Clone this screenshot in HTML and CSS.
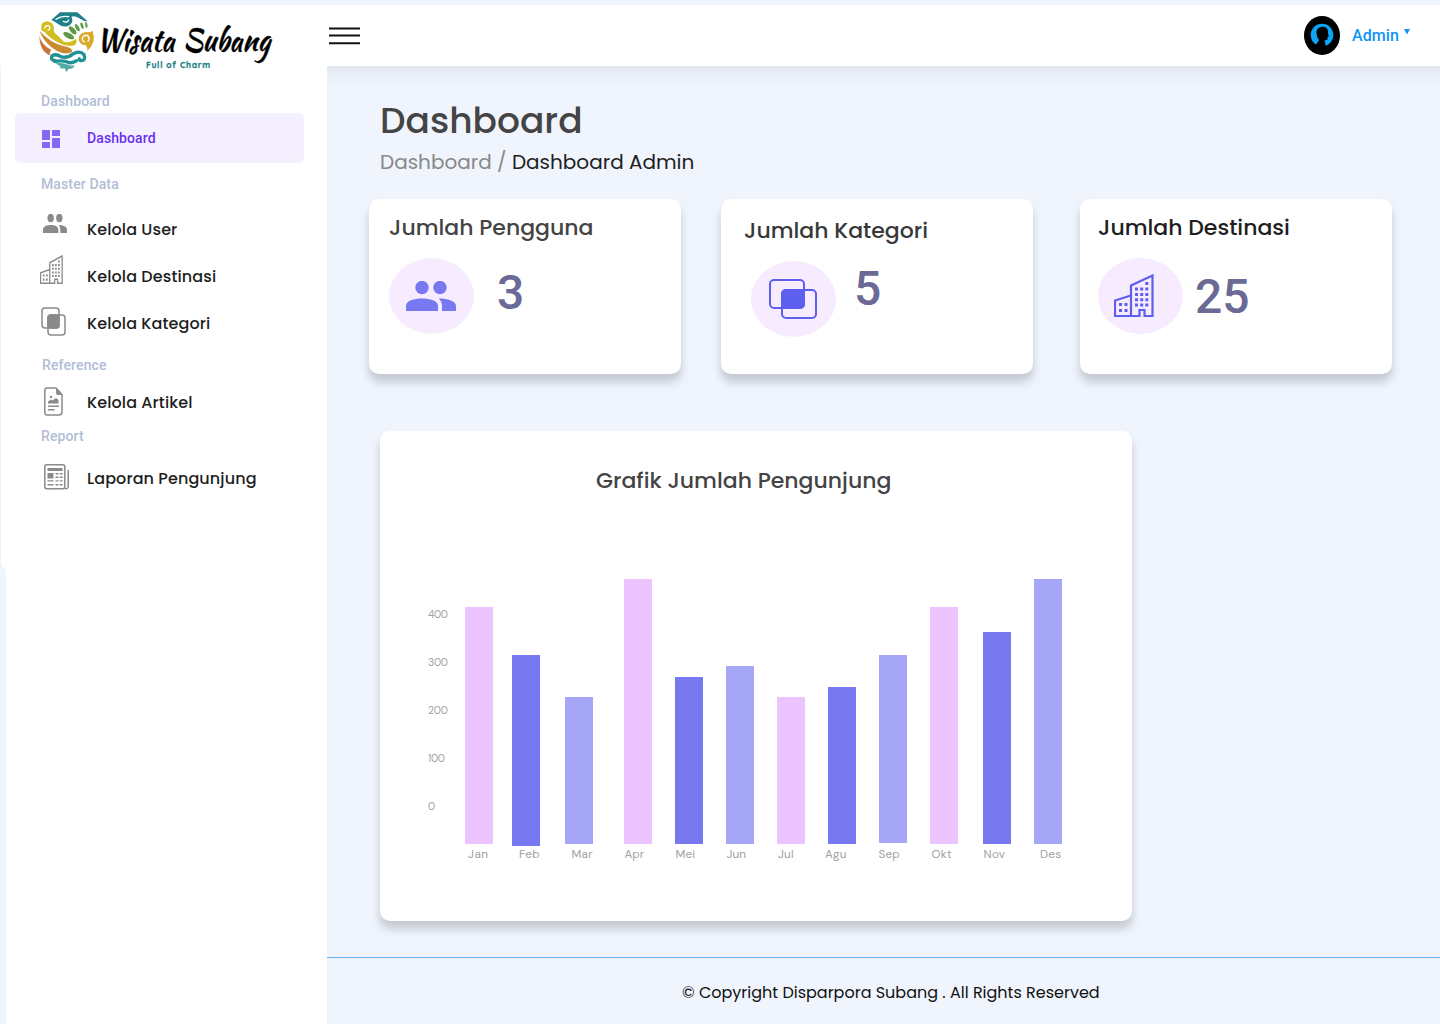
FILE: index.html
```html
<!DOCTYPE html>
<html lang="id">
<head>
<meta charset="utf-8">
<title>Dashboard - Wisata Subang</title>
<link rel="stylesheet" href="styles.css">
</head>
<body>
<svg class="defs" width="0" height="0" aria-hidden="true">
  <symbol id="users" viewBox="0 0 50 30" preserveAspectRatio="none">
    <circle cx="16" cy="6.5" r="6.7"/><circle cx="34" cy="6.5" r="6.7"/>
    <path d="M0 30V25C0 19.500 8 17.500 16 17.500S32 19.500 32 25V30ZM32.500 17.500C42 17.500 50 20 50 25V30H36V25C36 21.500 34.500 19 32.500 17.500Z"/>
  </symbol>
  <symbol id="building" viewBox="0 0 40 43" preserveAspectRatio="none">
    <path fill="none" stroke="currentColor" stroke-width="2.200" d="M1 42V26.500L17 21.500V42ZM17 42V11.500L38.500 1.500V42H30.500V36H25.500V42Z"/>
    <path d="M5 29h3v3h-3zM10.500 29h3v3h-3zM5 35h3v3h-3zM10.500 35h3v3h-3zM31.300 8h3v3h-3zM21 13.500h3v3h-3zM26.200 13.500h3v3h-3zM31.300 13.500h3v3h-3zM21 19h3v3h-3zM26.200 19h3v3h-3zM31.300 19h3v3h-3zM21 24.300h3v3h-3zM26.200 24.300h3v3h-3zM31.300 24.300h3v3h-3zM21 29.500h3v3h-3zM26.200 29.500h3v3h-3zM31.300 29.500h3v3h-3z"/>
  </symbol>
</svg>
<div class="app">
  <aside class="sidebar">
    <div class="logo">
      <svg width="240" height="66" viewBox="0 0 240 66">
        <g transform="translate(-40 -5) scale(.3333)" fill="none" stroke-linecap="round">
          <path fill="#1f7f87" d="M154 60L180 37H232L263 64Q250 64 238 55Q224 46 214 50Q222 64 210 75Q196 84 180 76Q168 66 154 60Z"/>
          <path stroke="#fff" stroke-width="4" d="M168 58Q184 46 206 50M190 64Q202 70 206 60"/>
          <path fill="#d0bd22" d="M124 88Q120 66 142 64Q160 66 162 84Q158 96 170 104Q180 112 190 124Q206 132 228 116Q232 130 224 136Q200 142 176 128Q150 116 134 96Q126 96 124 88Z"/>
          <path stroke="#fff" stroke-width="4" d="M134 84Q138 74 147 78Q154 86 144 90"/>
          <path fill="#c98a30" d="M118 92Q150 128 190 138Q220 142 216 156Q196 166 170 152Q134 132 118 92Z"/>
          <path fill="#c8743b" d="M118 108Q124 134 154 150Q146 158 152 166Q120 158 118 108Z"/>
          <path fill="#dba92c" d="M278 92Q290 128 262 152Q262 142 258 136Q236 134 236 116Q238 98 258 96Q270 98 278 92Z"/>
          <path stroke="#fff" stroke-width="4" d="M254 126Q244 122 248 112Q254 102 264 108Q270 116 264 124"/>
          <path stroke="#1f9294" stroke-width="10" d="M166 182Q150 180 156 168Q168 160 182 170Q204 176 218 162Q240 150 252 164Q258 180 246 182Q238 182 238 176M164 184Q186 180 202 186Q216 192 230 182"/>
          <path fill="#53aaa4" d="M165 190Q185 186 205 194Q218 200 224 194Q222 207 205 207L200 217L194 205Q176 208 182 200Q174 194 165 190Z"/>
          <g fill="#5e9a48"><ellipse cx="206" cy="107" rx="18" ry="8" transform="rotate(28 206 107)"/><ellipse cx="218" cy="91" rx="15" ry="7" transform="rotate(48 218 91)"/><ellipse cx="232" cy="83" rx="12" ry="5" transform="rotate(62 232 83)"/><ellipse cx="246" cy="77" rx="10" ry="4" transform="rotate(72 246 77)"/><ellipse cx="259" cy="75" rx="9" ry="3.500" transform="rotate(80 259 75)"/></g>
        </g>
        <text class="script" x="56.500" y="46" textLength="78" lengthAdjust="spacingAndGlyphs">Wisata</text>
        <text class="script" x="143" y="46" textLength="87" lengthAdjust="spacingAndGlyphs">Subang</text>
        <text class="tag" x="106" y="62.500" textLength="64">Full of Charm</text>
      </svg>
    </div>
    <nav class="menu">
      <h2 class="group g1">Dashboard</h2>
      <a class="item active"><span class="ico"><svg width="18" height="18" fill="#8567f5"><path d="M0 0h8v10H0zM10 0h8v6h-8zM0 12h8v6H0zM10 8h8v10h-8z"/></svg></span><span class="label">Dashboard</span></a>
      <h2 class="group g2">Master Data</h2>
      <a class="item"><span class="ico up"><svg width="24" height="19"><use href="#users"/></svg></span><span class="label">Kelola User</span></a>
      <a class="item"><span class="ico bld"><svg width="23" height="29"><use href="#building"/></svg></span><span class="label">Kelola Destinasi</span></a>
      <a class="item"><span class="ico cat"><svg width="25" height="29" fill="none" stroke="currentColor" stroke-width="1.500"><rect x="1" y="1" width="17" height="20" rx="3"/><rect x="7" y="8" width="17" height="20" rx="3"/><rect x="7" y="8" width="11" height="13" rx="2.500" fill="currentColor"/></svg></span><span class="label">Kelola Kategori</span></a>
      <h2 class="group g3">Reference</h2>
      <a class="item art"><span class="ico"><svg width="22" height="29" viewBox="-2 0 22 29"><path fill="none" stroke="currentColor" stroke-width="1.500" d="M3 1H12L18 7.500V25Q18 28 15 28H3Q.8 28 .8 25V4Q.8 1 3 1Z"/><path d="M12 1V5.500Q12 8 14 8H18ZM4 16.500V14.500L7 12.500L8.500 13.500L12 11L14.500 13V16.500ZM4 18.500h11v1.500H4zM4 22h6.500v1.500H4z"/><circle cx="7" cy="10" r="1.200"/></svg></span><span class="label">Kelola Artikel</span></a>
      <h2 class="group g4">Report</h2>
      <a class="item rep"><span class="ico"><svg width="27" height="26" viewBox="-2 0 27 26"><rect x=".8" y=".8" width="20" height="24" rx="2" fill="none" stroke="currentColor" stroke-width="1.500"/><path fill="none" stroke="currentColor" stroke-width="1.500" d="M21 24.800Q24.300 25 24.200 22V6"/><path d="M3.500 4h15v3h-15zM3.500 9h6v5.500h-6zM11.500 9h3v1.400h-3zM15.700 9h3v1.400h-3zM11.500 12.500h3v1.400h-3zM15.700 12.500h3v1.400h-3zM3.500 16.200h6v1.400h-6zM11.500 16.200h3v1.400h-3zM15.700 16.200h3v1.400h-3zM3.500 20h6v1.400h-6zM11.500 20h3v1.400h-3zM15.700 20h3v1.400h-3z"/></svg></span><span class="label">Laporan Pengunjung</span></a>
    </nav>
  </aside>
  <div class="page">
    <header class="topbar">
      <svg class="burger" width="31" height="18" stroke="#111" stroke-width="2"><path d="M0 1.400h31M0 8.600h31M0 16.300h31"/></svg>
      <div class="account">
        <svg width="36" height="39" viewBox="0 0 36 39"><ellipse cx="18" cy="19.500" rx="18" ry="19.500"/><circle cx="18" cy="19" r="11.300" fill="#0aa5f5"/><path d="M12.500 17Q12 12 17 11Q23 10 24 15V18L25 20L23.500 21V23.500L20.500 24.500L22 31L24 34Q17 34 10 30Q14 27 15 24Q12.500 21 12.500 17Z"/></svg>
        <span class="name">Admin</span>
        <svg class="caret" width="6" height="6" fill="#0d94f5"><path d="M0 0h6L3 5.500z"/></svg>
      </div>
    </header>
    <main>
      <h1>Dashboard</h1>
      <p class="crumbs"><span class="muted">Dashboard /</span> <span>Dashboard Admin</span></p>
      <section class="cards">
        <article class="card c1"><h3>Jumlah Pengguna</h3><div class="stat"><span class="disc"><svg width="50" height="30"><use href="#users"/></svg></span><b>3</b></div></article>
        <article class="card c2"><h3>Jumlah Kategori</h3><div class="stat"><span class="disc"><svg width="48" height="40" fill="none" stroke="#5d5fef" stroke-width="2"><rect x="1" y="1" width="34" height="28" rx="4"/><rect x="13" y="11" width="34" height="28" rx="4"/><rect x="13" y="11" width="22" height="18" rx="4" fill="#5d5fef"/></svg></span><b>5</b></div></article>
        <article class="card c3"><h3>Jumlah Destinasi</h3><div class="stat"><span class="disc"><svg width="40" height="43"><use href="#building"/></svg></span><b>25</b></div></article>
      </section>
      <section class="chart">
        <h3>Grafik Jumlah Pengunjung</h3>
        <svg width="752" height="330" viewBox="380 560 752 330">
          <g class="pink"><path d="M465 607h28v237h-28zM624 579h28v265h-28zM777 697h28v147h-28zM930 607h28v237h-28z"/></g>
          <g class="blue"><path d="M512 655h28v191h-28zM675 677h28v167h-28zM828 687h28v157h-28zM983 632h28v212h-28z"/></g>
          <g class="lilac"><path d="M565 697h28v147h-28zM726 666h28v178h-28zM879 655h28v188h-28zM1034 579h28v265h-28z"/></g>
          <g class="ticks">
            <text x="428" y="618" textLength="20">400</text><text x="428" y="666" textLength="20">300</text><text x="428" y="714" textLength="20">200</text><text x="428" y="762" textLength="17">100</text><text x="428" y="810">0</text>
          </g>
          <g class="months">
            <text x="468" y="858" textLength="20">Jan</text><text x="519" y="858" textLength="20.500">Feb</text><text x="571.500" y="858" textLength="21">Mar</text><text x="624.500" y="858" textLength="19.500">Apr</text><text x="675.500" y="858" textLength="19.500">Mei</text><text x="726.500" y="858" textLength="19.500">Jun</text><text x="778" y="858" textLength="15.500">Jul</text><text x="825" y="858" textLength="21.500">Agu</text><text x="878.500" y="858" textLength="21">Sep</text><text x="931.500" y="858" textLength="20">Okt</text><text x="983.500" y="858" textLength="21.500">Nov</text><text x="1040" y="858" textLength="21">Des</text>
          </g>
        </svg>
      </section>
    </main>
    <footer>© Copyright Disparpora Subang . All Rights Reserved</footer>
  </div>
</div>
</body>
</html>
```
FILE: styles.css
```css
* { box-sizing: border-box; }
body {
  margin: 0;
  width: 1440px;
  height: 1024px;
  overflow: hidden;
  background: #eff4fd;
  color: #1e1e1e;
  font-family: Poppins, Inter, sans-serif;
}
h1, h2, h3, p { margin: 0; font-weight: 500; }
.defs { position: absolute; }
.app { display: flex; height: 1024px; }
.sidebar {
  width: 327px;
  padding-top: 5px;
  background:
    linear-gradient(#fff, #fff) 0 5px / 100% 61px no-repeat,
    linear-gradient(#fff, #fff) 1px 66px / 326px 495px no-repeat,
    radial-gradient(circle, #fff 9.5px, transparent 10.5px) 0 550px / 22px 22px no-repeat,
    linear-gradient(#fff, #fff) 6px 560px / 321px 464px no-repeat;
}
.logo { height: 81px; padding: 0 0 0 40px; }
.logo svg { display: block; overflow: visible; }
.script {
  font: 32px "Kaushan Script", "Dancing Script", "Brush Script MT", Pacifico, "Liberation Serif", cursive;
  stroke: #000;
  stroke-width: .4;
}
.tag { font: bold 8.500px Quicksand, Nunito, Roboto, sans-serif; fill: #258184; stroke: #258184; stroke-width: .3; }
.menu { display: flex; flex-direction: column; }
.group {
  height: 20px;
  padding-left: 41px;
  font: 500 14px/19px Roboto, sans-serif;
  letter-spacing: .12px;
  color: #b2bdd6;
}
.g1 { margin-top: 6px; }
.item { display: flex; align-items: center; height: 47px; padding-left: 40px; font-size: 16px; font-weight: 500; letter-spacing: .1px; }
.label { padding-top: 1px; }
.ico { display: flex; width: 47px; color: #8a8a8a; fill: #8a8a8a; }
.active { width: 289px; height: 50px; margin: 1px 0 0 15px; padding-left: 27px; border-radius: 5px; background: #f5f0ff; color: #6a2ff2; font: 500 14px Roboto, sans-serif; }
.active .ico { width: 45px; padding-top: 2px; }
.active .label { padding-top: 0; }
.g2 { margin: 12px 0 10px; }
.up { padding: 0 0 10px 3px; }
.bld { padding-bottom: 12px; }
.cat { padding-left: 1px; padding-bottom: 2px; }
.g3 { padding-left: 42px; margin-top: 9px; line-height: 21px; }
.art { height: 52px; padding-left: 42px; }
.art .ico, .rep .ico { width: 45px; }
.art .label, .rep .label { padding-top: 2px; }
.rep { height: 60px; padding-left: 42px; }
.page { flex: 1; display: flex; flex-direction: column; min-width: 0; }
.topbar {
  flex: none;
  display: flex; align-items: center; justify-content: space-between;
  height: 61px; margin-top: 5px; padding: 0 30px 0 2px;
  background: #fff;
}
.account { display: flex; align-items: center; }
.name { margin: 0 5px 0 12px; font: 500 16px Roboto, sans-serif; letter-spacing: .1px; color: #0d94f5; }
.caret { margin-bottom: 8px; }
main {
  flex: none;
  height: 891px;
  padding: 29px 0 0 53px;
  background: linear-gradient(#e1e6ee, #e6ebf4 6px, #eff4fd 18px);
}
h1 { height: 52px; font-size: 36px; line-height: 52px; color: #444; }
.crumbs { height: 30px; font-size: 20px; line-height: 30px; font-weight: 400; }
.muted { color: #888; }
.cards { display: flex; gap: 40px; margin: 22px 0 0 -11px; }
.card { width: 312px; height: 175px; padding: 12px 0 0 20px; border-radius: 10px; background: #fff; box-shadow: 0 8px 10px rgba(0, 0, 0, .18); }
.card h3 { height: 34px; font-size: 22px; line-height: 34px; color: #444; }
.stat { display: flex; align-items: flex-start; margin-top: 13px; }
.disc { display: flex; align-items: center; justify-content: center; width: 85px; height: 76px; padding-right: 2px; border-radius: 50%; background: #f7ebff; color: #5d5fef; fill: #7879f1; }
.stat b { font: 500 48px/56px Roboto, sans-serif; color: #6b6996; margin: 7px 0 0 23px; }
.c2 { padding: 15px 0 0 23px; }
.c2 h3 { color: #383838; }
.c2 .disc { margin-left: 7px; }
.c2 .stat b { margin: 0 0 0 18px; }
.c3 { margin-left: 7px; padding-left: 18px; }
.c3 h3 { color: #1e1e1e; }
.c3 .disc { fill: #5d5fef; padding: 0 13px 2px 0; }
.c3 .stat b { margin: 11px 0 0 12px; }
.chart { width: 752px; height: 490px; margin-top: 57px; padding-top: 33px; border-radius: 10px; background: #fff; box-shadow: 0 8px 10px rgba(0, 0, 0, .18); }
.chart h3 { height: 34px; padding-left: 216px; font-size: 22px; line-height: 34px; color: #444; }
.chart svg { display: block; margin-top: 62px; }
.pink { fill: #ecc4ff; }
.blue { fill: #7879f1; }
.lilac { fill: #a5a6f6; }
.ticks { font: 10.500px "DM Sans", Inter, sans-serif; fill: #a0a0a0; }
.months { font: 11.700px "DM Sans", Inter, sans-serif; fill: #a0a0a0; }
footer {
  flex: none;
  height: 67px;
  padding-left: 355px;
  border-top: 1px solid #66b0ee;
  font-size: 16px;
  line-height: 70px;
  color: #111;
}
```
